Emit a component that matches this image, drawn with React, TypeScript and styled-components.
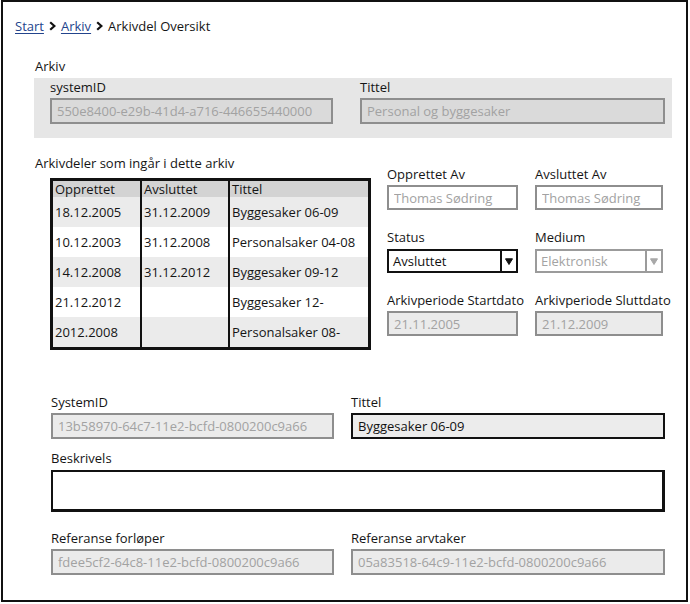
import React from 'react';
import styled, { createGlobalStyle } from 'styled-components';

// --- Global ---
const GlobalStyle = createGlobalStyle`
  html, body {
    margin: 0;
    padding: 0;
    background: #ffffff;
  }
  body {
    font-family: 'Open Sans', 'Liberation Sans', sans-serif;
    font-size: 13px;
    color: #151515;
  }
  * { box-sizing: border-box; }
`;

type Tone = 'white' | 'sunken' | 'gray' | 'active';

const toneBg: Record<Tone, string> = {
  white: '#ffffff',
  sunken: '#dadada',
  gray: '#ebebeb',
  active: '#ececec',
};

// --- Frame & breadcrumb ---

const Frame = styled.div`
  width: 687px;
  height: 602px;
  margin-left: 1px;
  border: 2px solid #111;
  display: flex;
  flex-direction: column;
`;

const Crumbs = styled.nav`
  display: flex;
  align-items: center;
  gap: 5px;
  margin: 15px 0 0 12px;
  line-height: 18px;
`;

const CrumbLink = styled.a`
  color: #23448c;
  text-decoration: underline;
  text-underline-offset: 2px;
  cursor: pointer;
`;

const Chevron = () => (
  <svg width="7" height="10" viewBox="0 0 7 10">
    <path d="M1.2 1.2 L5.4 5 L1.2 8.8" fill="none" stroke="#111" strokeWidth="2.2" />
  </svg>
);

// --- Body ---

const Body = styled.div`
  padding: 23px 0 0 31px;
  display: flex;
  flex-direction: column;
`;

const SectionTitle = styled.div`
  line-height: 16px;
  padding-left: 1px;
`;

const Panel = styled.div`
  width: 638px;
  margin-top: 4px;
  padding: 1px 7px 14px 16px;
  background: #e6e6e6;
  display: grid;
  grid-template-columns: 283px 305px;
  column-gap: 27px;
`;

const Field = styled.div<{ $gap?: number }>`
  display: flex;
  flex-direction: column;
  gap: ${(p) => p.$gap ?? 3}px;
`;

const Label = styled.label`
  line-height: 16px;
  white-space: nowrap;
`;

const TextBox = styled.input<{ $tone: Tone; $h?: number }>`
  width: 100%;
  height: ${(p) => p.$h ?? 26}px;
  padding: 0 5px;
  font: inherit;
  outline: none;
  border: 2px solid ${(p) => (p.$tone === 'active' ? '#111' : '#8e8e8e')};
  background: ${(p) => toneBg[p.$tone]};
  color: ${(p) => (p.$tone === 'active' ? '#111' : '#a2a2a2')};
  border-radius: 0;
`;

const TextArea = styled.textarea`
  width: 100%;
  height: 42px;
  border: 2px solid #111;
  border-width: 2px 3px 3px 2px;
  background: #ffffff;
  resize: none;
  outline: none;
  font: inherit;
  margin-bottom: 7px;
`;

// --- Parts section (table + details) ---

const PartsRow = styled.div`
  display: flex;
  margin-top: 17px;
  gap: 16px;
`;

const PartsCol = styled.div`
  width: 337px;
  display: flex;
  flex-direction: column;
`;

const Table = styled.div`
  width: 321px;
  margin: 7px 0 0 16px;
  border: 3px solid #111;
  display: grid;
  grid-template-columns: 87px 88px 140px;
`;

const Cell = styled.div<{ $head?: boolean; $odd?: boolean }>`
  height: ${(p) => (p.$head ? 16 : 30)}px;
  line-height: ${(p) => (p.$head ? 16 : 30)}px;
  padding-left: 2px;
  white-space: nowrap;
  overflow: hidden;
  background: ${(p) => (p.$head ? '#d3d3d3' : p.$odd ? '#ebebeb' : '#ffffff')};
  &:not(:nth-child(3n + 1)) {
    border-left: 2px solid #111;
  }
`;

const DetailGrid = styled.div`
  margin-top: 11px;
  display: grid;
  grid-template-columns: 131px 128px;
  column-gap: 17px;
  row-gap: 19px;
  align-content: start;
`;

const SelectBox = styled.div<{ $muted?: boolean }>`
  display: flex;
  height: 24px;
  border: 2px solid ${(p) => (p.$muted ? '#9b9b9b' : '#111')};
  background: #ffffff;
  color: ${(p) => (p.$muted ? '#a3a3a3' : '#111')};
`;

const SelectValue = styled.span`
  flex: 1;
  padding-left: 4px;
  line-height: 20px;
`;

const SelectButton = styled.span<{ $muted?: boolean }>`
  width: 16px;
  border-left: 2px solid ${(p) => (p.$muted ? '#9b9b9b' : '#111')};
  display: flex;
  align-items: center;
  justify-content: center;
`;

const Caret = ({ color }: { color: string }) => (
  <svg width="8" height="7" viewBox="0 0 8 7">
    <path d="M0.5 0.8 H7.5 L4 6.5 Z" fill={color} stroke={color} strokeLinejoin="round" />
  </svg>
);

// --- Record section ---

const RecordGrid = styled.div`
  margin: 44px 0 0 17px;
  width: 614px;
  display: grid;
  grid-template-columns: 283px 314px;
  column-gap: 17px;
  row-gap: 11px;
`;

const Wide = styled(Field)`
  grid-column: 1 / span 2;
`;

const rows = [
  ['18.12.2005', '31.12.2009', 'Byggesaker 06-09'],
  ['10.12.2003', '31.12.2008', 'Personalsaker 04-08'],
  ['14.12.2008', '31.12.2012', 'Byggesaker 09-12'],
  ['21.12.2012', '', 'Byggesaker 12-'],
  ['2012.2008', '', 'Personalsaker 08-'],
];

const App = () => (
  <>
    <GlobalStyle />
    <Frame>
      <Crumbs>
        <CrumbLink>Start</CrumbLink>
        <Chevron />
        <CrumbLink>Arkiv</CrumbLink>
        <Chevron />
        <span>Arkivdel Oversikt</span>
      </Crumbs>

      <Body>
        <SectionTitle>Arkiv</SectionTitle>
        <Panel>
          <Field>
            <Label>systemID</Label>
            <TextBox $tone="sunken" readOnly value="550e8400-e29b-41d4-a716-446655440000" />
          </Field>
          <Field>
            <Label>Tittel</Label>
            <TextBox $tone="sunken" readOnly value="Personal og byggesaker" />
          </Field>
        </Panel>

        <PartsRow>
          <PartsCol>
            <SectionTitle>Arkivdeler som ingår i dette arkiv</SectionTitle>
            <Table>
              <Cell $head>Opprettet</Cell>
              <Cell $head>Avsluttet</Cell>
              <Cell $head>Tittel</Cell>
              {rows.map((r, i) =>
                r.map((c, j) => (
                  <Cell key={`${i}-${j}`} $odd={i % 2 === 0}>
                    {c}
                  </Cell>
                ))
              )}
            </Table>
          </PartsCol>

          <DetailGrid>
            <Field>
              <Label>Opprettet Av</Label>
              <TextBox $tone="white" $h={25} readOnly value="Thomas Sødring" />
            </Field>
            <Field>
              <Label>Avsluttet Av</Label>
              <TextBox $tone="white" $h={25} readOnly value="Thomas Sødring" />
            </Field>
            <Field $gap={4}>
              <Label>Status</Label>
              <SelectBox>
                <SelectValue>Avsluttet</SelectValue>
                <SelectButton>
                  <Caret color="#111" />
                </SelectButton>
              </SelectBox>
            </Field>
            <Field $gap={4}>
              <Label>Medium</Label>
              <SelectBox $muted>
                <SelectValue>Elektronisk</SelectValue>
                <SelectButton $muted>
                  <Caret color="#a8a8a8" />
                </SelectButton>
              </SelectBox>
            </Field>
            <Field>
              <Label>Arkivperiode Startdato</Label>
              <TextBox $tone="gray" $h={25} readOnly value="21.11.2005" />
            </Field>
            <Field>
              <Label>Arkivperiode Sluttdato</Label>
              <TextBox $tone="gray" $h={25} readOnly value="21.12.2009" />
            </Field>
          </DetailGrid>
        </PartsRow>

        <RecordGrid>
          <Field>
            <Label>SystemID</Label>
            <TextBox $tone="gray" readOnly value="13b58970-64c7-11e2-bcfd-0800200c9a66" />
          </Field>
          <Field>
            <Label>Tittel</Label>
            <TextBox $tone="active" readOnly value="Byggesaker 06-09" />
          </Field>
          <Wide $gap={4}>
            <Label>Beskrivels</Label>
            <TextArea readOnly />
          </Wide>
          <Field>
            <Label>Referanse forløper</Label>
            <TextBox $tone="gray" readOnly value="fdee5cf2-64c8-11e2-bcfd-0800200c9a66" />
          </Field>
          <Field>
            <Label>Referanse arvtaker</Label>
            <TextBox $tone="gray" readOnly value="05a83518-64c9-11e2-bcfd-0800200c9a66" />
          </Field>
        </RecordGrid>
      </Body>
    </Frame>
  </>
);

export default App;
